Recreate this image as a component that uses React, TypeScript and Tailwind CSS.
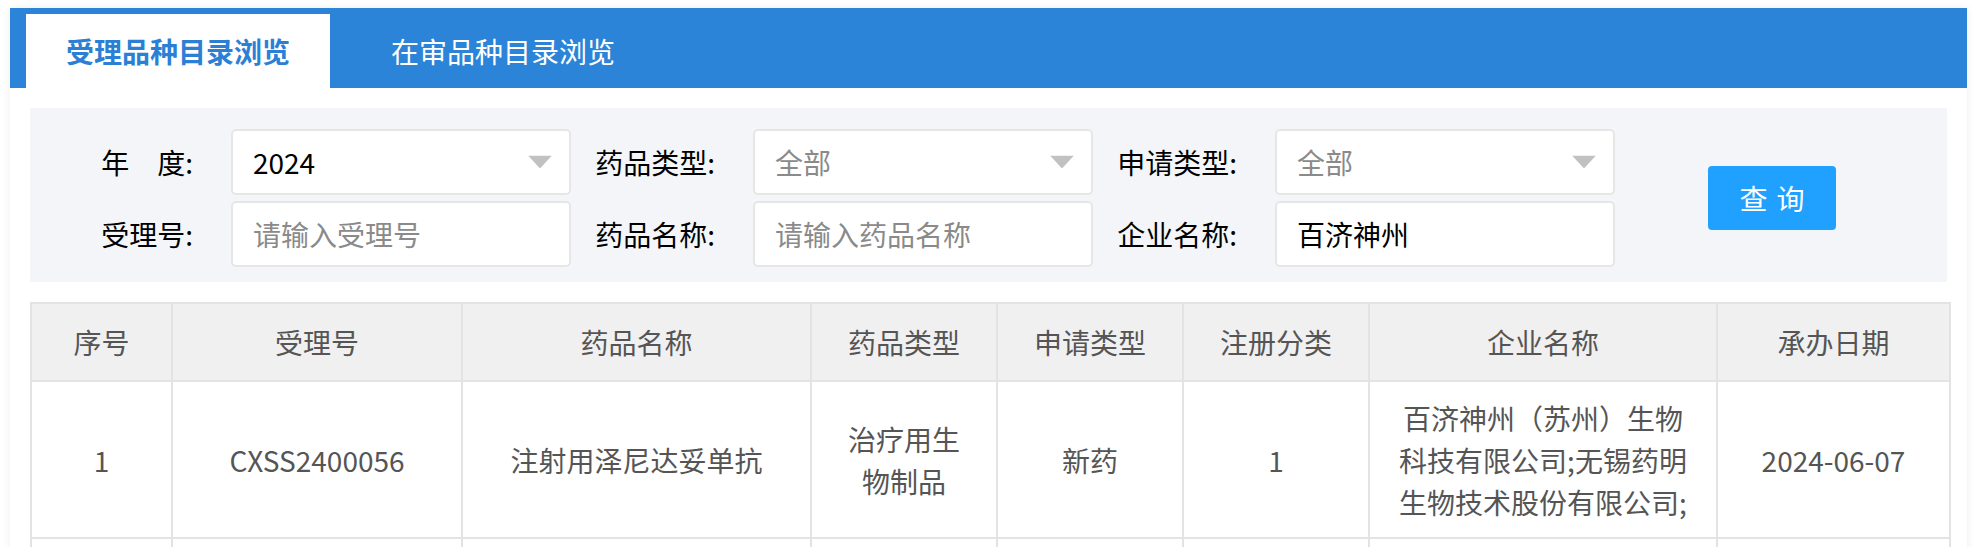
import React from "react";

const font = "font-['Microsoft_YaHei','Noto_Sans_CJK_SC','Noto_Sans',sans-serif]";

function Caret() {
  return (
    <svg width="24" height="13" viewBox="0 0 24 13" className="absolute right-[17px] top-1/2 -translate-y-1/2">
      <polygon points="0,0 24,0 12,13" fill="#c1c1c1" />
    </svg>
  );
}

function Field({
  label,
  value,
  placeholder,
  select,
}: {
  label: string;
  value?: string;
  placeholder?: string;
  select?: boolean;
}) {
  return (
    <div className="flex items-center">
      <div className="w-[122px] shrink-0 text-right text-[28px] leading-[42px] text-black whitespace-nowrap">{label}</div>
      <div className="relative ml-[38px] flex h-[66px] w-[340px] items-center rounded-[5px] border-2 border-[#e6e6e6] bg-white pl-[20px] text-[28px] leading-[42px]">
        {value ? (
          <span className="text-black">{value}</span>
        ) : (
          <span className="text-[#8a8a8a]">{placeholder}</span>
        )}
        {select && <Caret />}
      </div>
    </div>
  );
}

const cols = [141, 290, 349, 186, 186, 186, 348, 233];
const headers = ["序号", "受理号", "药品名称", "药品类型", "申请类型", "注册分类", "企业名称", "承办日期"];

export default function App() {
  return (
    <div className={`min-h-screen bg-white px-[10px] pt-[8px] ${font}`}>
      <div className="bg-white shadow-[0_0_8px_rgba(0,0,0,0.07)]">
        <div className="flex h-[80px] items-end bg-[#2b84d7] pl-[16px]">
          <div className="flex h-[74px] w-[304px] items-center justify-center bg-white text-[28px] font-bold leading-none text-[#2b80d5]">
            受理品种目录浏览
          </div>
          <div className="ml-[21px] flex h-[74px] w-[304px] items-center justify-center text-[28px] leading-none text-white">
            在审品种目录浏览
          </div>
        </div>

        <div className="p-[20px]">
          <div className="flex items-center bg-[#f3f5f9] pb-[15px] pl-[41px] pt-[21px]">
            <div className="grid grid-cols-[500px_500px_500px] gap-x-[22px] gap-y-[6px]">
              <Field label="年　度:" value="2024" select />
              <Field label="药品类型:" placeholder="全部" select />
              <Field label="申请类型:" placeholder="全部" select />
              <Field label="受理号:" placeholder="请输入受理号" />
              <Field label="药品名称:" placeholder="请输入药品名称" />
              <Field label="企业名称:" value="百济神州" />
            </div>
            <button className="ml-[93px] flex h-[64px] w-[128px] items-center justify-center rounded-[4px] bg-[#20a0ff] pl-[9px] text-[28px] leading-none tracking-[9px] text-white">
              查询
            </button>
          </div>

          <table className="mt-[20px] w-[1920px] table-fixed border-collapse text-[28px] leading-[42px] text-[#555555]">
            <colgroup>
              {cols.map((w, i) => (
                <col key={i} style={{ width: w }} />
              ))}
            </colgroup>
            <thead>
              <tr className="h-[78px] bg-[#f0f0f0]">
                {headers.map((h) => (
                  <th key={h} className="border-2 border-[#e3e3e3] text-center font-normal">
                    {h}
                  </th>
                ))}
              </tr>
            </thead>
            <tbody>
              <tr className="h-[157px]">
                <td className="border-2 border-[#e3e3e3] text-center">1</td>
                <td className="border-2 border-[#e3e3e3] text-center">CXSS2400056</td>
                <td className="border-2 border-[#e3e3e3] text-center">注射用泽尼达妥单抗</td>
                <td className="border-2 border-[#e3e3e3] text-center">
                  <span className="block whitespace-nowrap">治疗用生</span>
                  <span className="block whitespace-nowrap">物制品</span>
                </td>
                <td className="border-2 border-[#e3e3e3] text-center">新药</td>
                <td className="border-2 border-[#e3e3e3] text-center">1</td>
                <td className="border-2 border-[#e3e3e3] text-center">
                  <span className="block whitespace-nowrap">百济神州（苏州）生物</span>
                  <span className="block whitespace-nowrap">科技有限公司;无锡药明</span>
                  <span className="block whitespace-nowrap">生物技术股份有限公司;</span>
                </td>
                <td className="border-2 border-[#e3e3e3] text-center">2024-06-07</td>
              </tr>
              <tr className="h-[157px]">
                {cols.map((_, i) => (
                  <td key={i} className="border-2 border-[#e3e3e3]"></td>
                ))}
              </tr>
            </tbody>
          </table>
        </div>
      </div>
    </div>
  );
}
